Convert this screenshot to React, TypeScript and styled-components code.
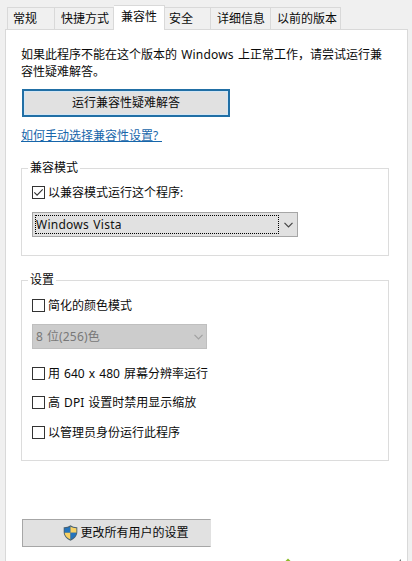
import React from "react";
import styled, { createGlobalStyle } from "styled-components";

const GlobalStyle = createGlobalStyle`
  *, *::before, *::after { box-sizing: border-box; }
  body {
    margin: 0;
    background: #f0f0f0;
    color: #0a0a0a;
    font: 12px/16px "Noto Sans", "Noto Sans CJK SC", sans-serif;
    word-spacing: 1px;
  }
`;

const Dialog = styled.div`
  display: flex;
  flex-direction: column;
  width: 412px;
  height: 561px;
  padding: 5px 4px 0 5px;
  overflow: hidden;
`;

const TabBar = styled.div`
  display: flex;
  align-items: flex-end;
  height: 24px;
  padding-left: 2px;
  flex: none;
`;

const Tab = styled.div<{ $width: number; $inset: number; $first?: boolean }>`
  width: ${(p) => p.$width}px;
  height: 22px;
  padding: 3px 0 0 ${(p) => p.$inset}px;
  border: 1px solid #d9d9d9;
  border-width: 1px 1px 0 ${(p) => (p.$first ? 1 : 0)}px;
  white-space: nowrap;
`;

const ActiveTab = styled(Tab)`
  height: 25px;
  margin-bottom: -1px;
  border-left: 0;
  background: #fff;
  z-index: 1;
`;

const Page = styled.main`
  display: flex;
  flex-direction: column;
  align-items: flex-start;
  width: 403px;
  height: 540px;
  flex: none;
  padding: 16px 0 0 15px;
  border: 1px solid #d9d9d9;
  background: #fff;
`;

const Intro = styled.p`
  margin: 0;
  width: 376px;
  line-height: 17px;
  white-space: nowrap;
`;

const Latin = styled.span<{ $spacing?: number }>`
  letter-spacing: ${(p) => p.$spacing ?? 0.2}px;
`;

const PushButton = styled.button<{ $primary?: boolean }>`
  display: flex;
  align-items: center;
  justify-content: center;
  gap: 2px;
  width: ${(p) => (p.$primary ? 208 : 189)}px;
  height: 28px;
  margin: ${(p) => (p.$primary ? "9px 0 0 1px" : "58px 0 0 1px")};
  padding: 0 ${(p) => (p.$primary ? 0 : 1)}px 0 ${(p) => (p.$primary ? 0 : 20)}px;
  border: ${(p) => (p.$primary ? "2px solid #216fa5" : "1px solid #a6a6a6")};
  border-right-color: ${(p) => (p.$primary ? "#216fa5" : "#e1e1e1")};
  box-shadow: ${(p) => (p.$primary ? "inset 0 0 0 1px #d3e6f5" : "none")};
  background: #e1e1e1;
  color: inherit;
  font: inherit;
`;

const HelpLink = styled.a`
  margin-top: 11px;
  padding-right: 4px;
  height: 14px;
  border-bottom: 1px solid #1766aa;
  color: #1766aa;
  line-height: 15px;
`;

const Group = styled.fieldset<{ $top: number; $height: number }>`
  display: block;
  width: 368px;
  height: ${(p) => p.$height}px;
  min-width: 0;
  margin: ${(p) => p.$top}px 0 0;
  padding: 0 0 0 10px;
  border: 1px solid #dcdcdc;
`;

const Legend = styled.legend`
  height: 16px;
  margin-left: -4px;
  padding: 0 2px;
`;

const CheckRow = styled.label<{ $gap: number }>`
  display: flex;
  align-items: flex-start;
  gap: 3px;
  height: 16px;
  margin-top: ${(p) => p.$gap}px;
`;

const Box = styled.span`
  display: flex;
  width: 13px;
  height: 13px;
  margin-top: 1px;
  border: 1px solid #333;
  background: #fff;
`;

const Select = styled.div<{ $width: number; $top: number; $disabled?: boolean }>`
  display: flex;
  align-items: center;
  justify-content: space-between;
  width: ${(p) => p.$width}px;
  height: 25px;
  margin-top: ${(p) => p.$top}px;
  padding: 0 ${(p) => (p.$disabled ? 3 : 4)}px 0 2px;
  border: 1px solid ${(p) => (p.$disabled ? "#bfbfbf" : "#a6a6a6")};
  background: ${(p) => (p.$disabled ? "#ccc" : "#e1e1e1")};
  color: ${(p) => (p.$disabled ? "#787878" : "#111")};
`;

const Value = styled.span<{ $focused?: boolean }>`
  width: ${(p) => (p.$focused ? 244 : 140)}px;
  height: 19px;
  border: 1px ${(p) => (p.$focused ? "dotted #000" : "solid transparent")};
  line-height: 17px;
`;

const Chevron = ({ color }: { color: string }) => (
  <svg width="9" height="6" viewBox="0 0 9 6" fill="none" stroke={color} strokeWidth="1.2">
    <path d="M.5.8 4.5 4.8 8.5.8" />
  </svg>
);

const Shield = () => (
  <svg width="15" height="16" viewBox="0 0 15 16">
    <path d="M7.5.3C5.8 1.6 3.3 2.4.7 2.3V7c0 4 3 7 6.8 8.7C11.3 14 14.3 11 14.3 7V2.3C11.7 2.4 9.2 1.6 7.5.3Z" fill="#49606f" />
    <path d="M7.5 1.5v6.3H1.6V3.2c2.3 0 4.3-.6 5.9-1.7Z" fill="#2474bd" />
    <path d="M7.5 1.5v6.3h5.9V3.2c-2.3 0-4.3-.6-5.9-1.7Z" fill="#f8d163" />
    <path d="M1.6 7.8h5.9v6.8C4.2 13 1.8 10.7 1.6 7.8Z" fill="#f8d163" />
    <path d="M13.4 7.8H7.5v6.8c3.3-1.6 5.7-3.9 5.9-6.8Z" fill="#2474bd" />
  </svg>
);

const CornerMarks = styled.div`
  display: flex;
  justify-content: space-between;
  width: 118px;
  margin: 11px 0 0 263px;
`;

const CheckOption = ({ label, gap, checked }: { label: string; gap: number; checked?: boolean }) => (
  <CheckRow $gap={gap}>
    <Box>
      {checked && (
        <svg width="11" height="11" viewBox="0 0 11 11" fill="none" stroke="#333" strokeWidth="1.1">
          <path d="M1.3 5.3 4.1 8.1 9.7 2.4" />
        </svg>
      )}
    </Box>
    <span>{label}</span>
  </CheckRow>
);

export default function App() {
  return (
    <>
      <GlobalStyle />
      <Dialog>
        <TabBar>
          <Tab $width={48} $inset={5} $first>常规</Tab>
          <Tab $width={59} $inset={6}>快捷方式</Tab>
          <ActiveTab $width={51} $inset={7}>兼容性</ActiveTab>
          <Tab $width={46} $inset={4}>安全</Tab>
          <Tab $width={60} $inset={6}>详细信息</Tab>
          <Tab $width={70} $inset={6}>以前的版本</Tab>
        </TabBar>
        <Page>
          <Intro>
            如果此程序不能在这个版本的 <Latin>Windows</Latin> 上正常工作，请尝试运行兼
            <br />
            容性疑难解答。
          </Intro>
          <PushButton $primary>运行兼容性疑难解答</PushButton>
          <HelpLink>如何手动选择兼容性设置?</HelpLink>
          <Group $top={18} $height={96}>
            <Legend>兼容模式</Legend>
            <CheckOption label="以兼容模式运行这个程序:" gap={9} checked />
            <Select $width={266} $top={11}>
              <Value $focused><Latin $spacing={0.25}>Windows Vista</Latin></Value>
              <Chevron color="#444" />
            </Select>
          </Group>
          <Group $top={16} $height={189}>
            <Legend>设置</Legend>
            <CheckOption label="简化的颜色模式" gap={10} />
            <Select $width={175} $top={10} $disabled>
              <Value>8 位<Latin>(256)</Latin>色</Value>
              <Chevron color="#a0a0a0" />
            </Select>
            <CheckOption label="用 640 x 480 屏幕分辨率运行" gap={17} />
            <CheckOption label="高 DPI 设置时禁用显示缩放" gap={13} />
            <CheckOption label="以管理员身份运行此程序" gap={14} />
          </Group>
          <PushButton>
            <Shield />
            更改所有用户的设置
          </PushButton>
          <CornerMarks>
            <svg width="8" height="4" viewBox="0 0 8 4">
              <path d="M4 .5 7.5 4H.5Z" fill="#8dbb29" />
            </svg>
            <svg width="4" height="4" viewBox="0 0 4 4">
              <path d="M1 4 2 1.5h1V4Z" fill="#777" />
            </svg>
          </CornerMarks>
        </Page>
      </Dialog>
    </>
  );
}
